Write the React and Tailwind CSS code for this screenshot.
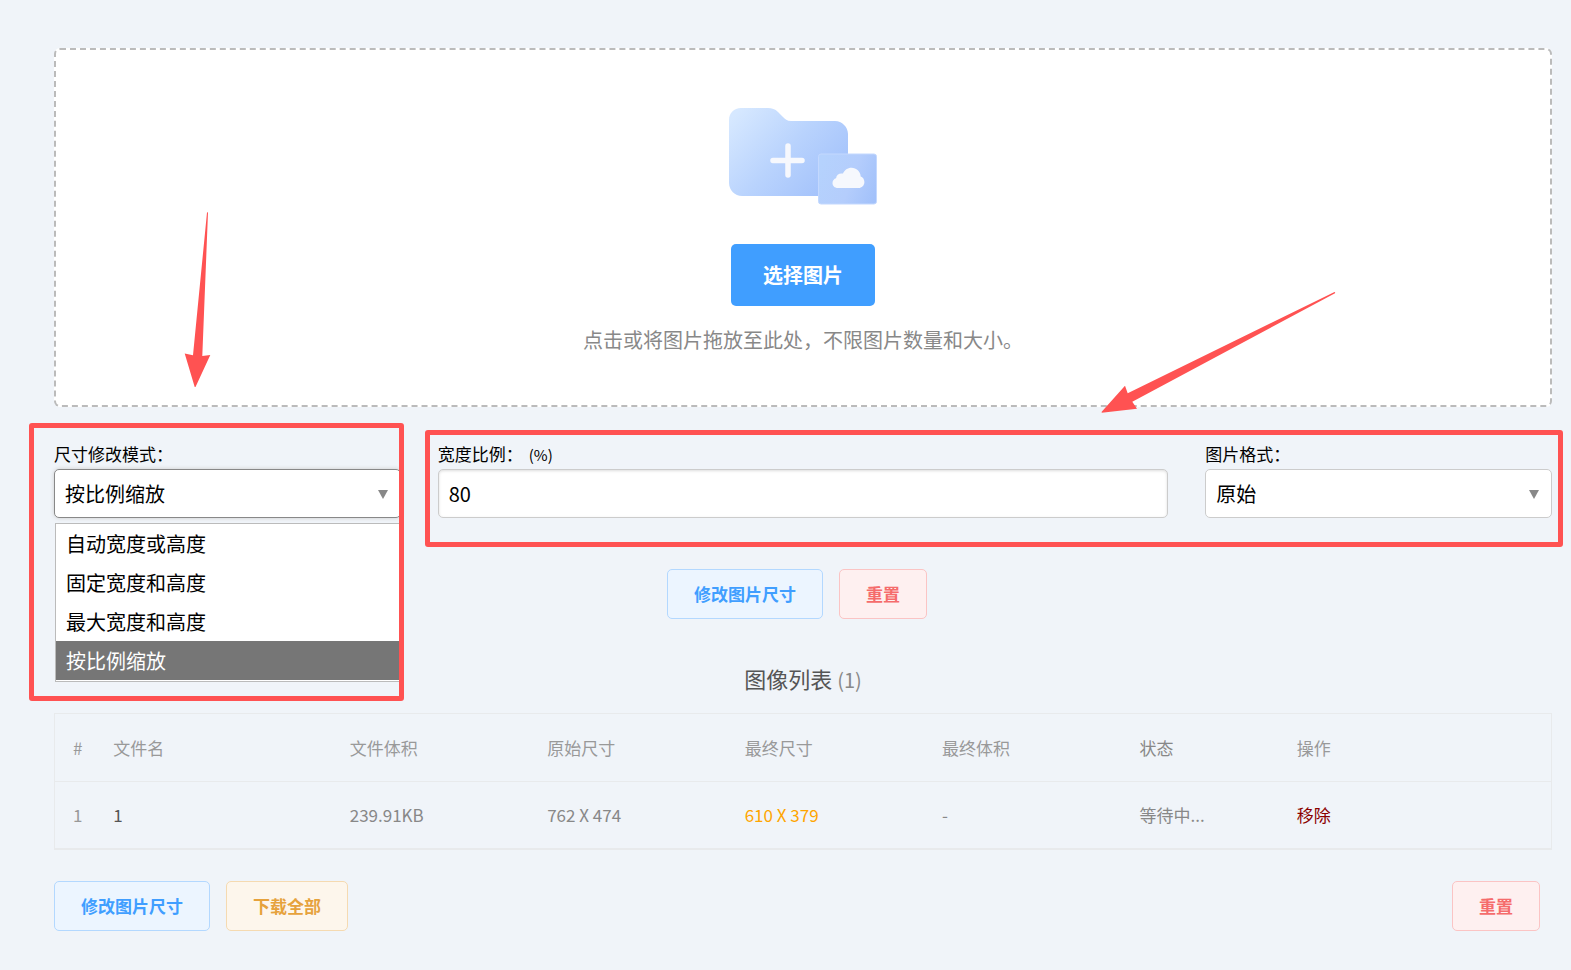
import React, { useState } from "react";

const modes = ["自动宽度或高度", "固定宽度和高度", "最大宽度和高度", "按比例缩放"];
const formats = ["原始", "JPG", "PNG", "WEBP"];

const images = [
  {
    id: 1,
    name: "1",
    size: "239.91KB",
    original: "762 X 474",
    final: "610 X 379",
    finalSize: "-",
    status: "等待中...",
  },
];

const buttonColors = {
  primary: "border-[#b3d8ff] bg-[#ecf5ff] text-[#409eff]",
  warning: "border-[#f5dab1] bg-[#fdf6ec] text-[#e6a23c]",
  danger: "border-[#fbc4c4] bg-[#fef0f0] text-[#f56c6c]",
};

const Button = ({ type, children, onClick }) => (
  <button
    type="button"
    onClick={onClick}
    className={`h-[50px] rounded-[5px] border px-[26px] text-[17px] font-semibold ${buttonColors[type]}`}
  >
    {children}
  </button>
);

const FolderIcon = () => (
  <svg width="148" height="98" viewBox="0 0 148 98" fill="none" aria-hidden="true">
    <defs>
      <linearGradient id="folder" x1="8" y1="4" x2="100" y2="88" gradientUnits="userSpaceOnUse">
        <stop stopColor="#d6e8ff" />
        <stop offset="0.5" stopColor="#b9d3fd" />
        <stop offset="1" stopColor="#a2c1fb" />
      </linearGradient>
      <linearGradient id="card" x1="90" y1="60" x2="149" y2="82" gradientUnits="userSpaceOnUse">
        <stop stopColor="#b5d2fd" />
        <stop offset="0.55" stopColor="#b4cdfc" />
        <stop offset="1" stopColor="#a2c1fa" />
      </linearGradient>
    </defs>
    <path
      d="M12 0h27c4 0 7 1 10 4l5 5c2 2 4 4 8 4h44c7 0 13 6 13 13v49c0 7-6 13-13 13H13C6 88 0 82 0 75V12C0 5 5 0 12 0z"
      fill="url(#folder)"
    />
    <path d="M59 38v29M44 52.500h29" stroke="#f6f8fd" strokeWidth="5.500" strokeLinecap="round" />
    <rect x="89.500" y="46" width="58" height="50" rx="2.500" fill="url(#card)" stroke="#c3d8fe" />
    <path
      d="M109 80c-3.500 0-5.500-2.300-5.500-5 0-2.400 1.500-4.300 3.600-4.800.2-2.900 2.400-4.800 5.400-4.800.5 0 1 0 1.500.2 1.400-3.500 4.600-5.800 8.500-5.800 4.900 0 8.900 3.800 9.200 8.600 2.200.8 3.700 2.900 3.700 5.500 0 3.300-2.500 6.100-6 6.100z"
      fill="#f6f8fd"
    />
  </svg>
);

const Caret = () => (
  <svg
    width="10"
    height="9"
    viewBox="0 0 10 9"
    className="pointer-events-none absolute right-[13px] top-[21px]"
    aria-hidden="true"
  >
    <path d="M0 0h10L5 9z" fill="#888" />
  </svg>
);

const App = () => {
  const [mode, setMode] = useState("按比例缩放");
  const [format, setFormat] = useState("原始");
  const [ratio, setRatio] = useState("80");

  return (
    <div className="relative min-h-screen bg-[#f0f4f9] pt-12 pr-[19px] pb-9 pl-[54px] font-['Noto_Sans_CJK_SC','Noto_Sans',sans-serif] text-black">
      {/* Drop zone */}
      <div className="flex flex-col items-center rounded-[6px] border-2 border-dashed border-[#bbb] bg-white pt-[58px] pb-[50px]">
        <FolderIcon />
        <button
          type="button"
          className="mt-[38px] h-[62px] rounded-[5px] bg-[#409eff] px-8 text-[20px] font-bold text-white"
        >
          选择图片
        </button>
        <p className="mt-[19px] text-[20px] leading-[30px] text-[#888]">
          点击或将图片拖放至此处，不限图片数量和大小。
        </p>
      </div>

      {/* Options */}
      <div className="mt-8 grid grid-cols-4 gap-[37px]">
        <div className="relative">
          <label htmlFor="mode" className="block h-[30px] text-[17px] leading-[30px]">
            尺寸修改模式：
          </label>
          <div className="relative">
            <select
              id="mode"
              value={mode}
              onChange={(e) => setMode(e.target.value)}
              className="h-[49px] w-full appearance-none rounded-[5px] border border-[#888] bg-white px-2.5 text-[20px] shadow-[0_0_4px_#ccc] outline-none"
            >
              {modes.map((m) => (
                <option key={m}>{m}</option>
              ))}
            </select>
            <Caret />
            <ul className="absolute inset-x-px top-full mt-[5px] border border-[#bbb] bg-white pb-px text-[20px] leading-[39px]">
              {modes.map((m) => (
                <li
                  key={m}
                  onClick={() => setMode(m)}
                  className={m === mode ? "bg-[#767676] px-2.5 text-white" : "px-2.5"}
                >
                  {m}
                </li>
              ))}
            </ul>
          </div>
          <div className="pointer-events-none absolute -top-4 -right-[3px] -left-[25px] h-[278px] rounded-[3px] border-5 border-[#ff5252]" />
        </div>

        <div className="relative col-span-3 grid grid-cols-3 gap-[37px]">
          <div className="col-span-2">
            <label htmlFor="ratio" className="block h-[30px] text-[17px] leading-[30px]">
              宽度比例：<span className="ml-1.5 text-[15px]">(%)</span>
            </label>
            <input
              id="ratio"
              type="text"
              value={ratio}
              onChange={(e) => setRatio(e.target.value)}
              className="block h-[49px] w-full rounded-[5px] border border-[#ccc] bg-white px-2.5 text-[20px] shadow-[inset_0_1px_3px_#ddd] outline-none"
            />
          </div>
          <div>
            <label htmlFor="format" className="block h-[30px] text-[17px] leading-[30px]">
              图片格式：
            </label>
            <div className="relative">
              <select
                id="format"
                value={format}
                onChange={(e) => setFormat(e.target.value)}
                className="block h-[49px] w-full appearance-none rounded-[5px] border border-[#ccc] bg-white px-2.5 text-[20px] outline-none"
              >
                {formats.map((f) => (
                  <option key={f}>{f}</option>
                ))}
              </select>
              <Caret />
            </div>
          </div>
          <div className="pointer-events-none absolute -top-[9px] -right-[11px] -bottom-[29px] -left-[13px] rounded-[3px] border-5 border-[#ff5252]" />
        </div>
      </div>

      <div className="mt-[51px] flex justify-center gap-4 pr-3">
        <Button type="primary">修改图片尺寸</Button>
        <Button type="danger">重置</Button>
      </div>

      {/* Image list */}
      <h2 className="mt-[43px] text-center text-[22px] leading-8 text-[#555]">
        图像列表 <span className="text-[20px] text-[#888]">(1)</span>
      </h2>

      <table className="mt-[17px] w-full table-fixed border-separate border-spacing-0 border border-b-2 border-[#e8eaec] text-left text-[17px] text-[#888]">
        <colgroup>
          <col className="w-[3.9%]" />
          <col className="w-[15.8%]" />
          <col className="w-[13.2%]" />
          <col className="w-[13.2%]" />
          <col className="w-[13.2%]" />
          <col className="w-[13.2%]" />
          <col className="w-[10.5%]" />
          <col />
        </colgroup>
        <thead>
          <tr className="h-[68px] text-[#999] *:border-b *:border-[#e8eaec] *:font-normal">
            <th className="pl-[18px]">#</th>
            <th>文件名</th>
            <th>文件体积</th>
            <th>原始尺寸</th>
            <th>最终尺寸</th>
            <th>最终体积</th>
            <th className="text-[#888]">状态</th>
            <th>操作</th>
          </tr>
        </thead>
        <tbody>
          {images.map((img) => (
            <tr key={img.id} className="h-[66px]">
              <td className="pl-[18px] text-[#999]">{img.id}</td>
              <td className="text-[#555]">{img.name}</td>
              <td>{img.size}</td>
              <td>{img.original}</td>
              <td className="text-[#ffa500]">{img.final}</td>
              <td>{img.finalSize}</td>
              <td>{img.status}</td>
              <td>
                <button type="button" className="text-[#8b0000]">
                  移除
                </button>
              </td>
            </tr>
          ))}
        </tbody>
      </table>

      <div className="mt-[31px] flex gap-4 pr-3">
        <Button type="primary">修改图片尺寸</Button>
        <Button type="warning">下载全部</Button>
        <div className="ml-auto">
          <Button type="danger">重置</Button>
        </div>
      </div>

      {/* Arrows pointing at the marked options */}
      <svg
        width="27"
        height="176"
        viewBox="184 212 27 176"
        className="pointer-events-none absolute top-[212px] left-[184px]"
        aria-hidden="true"
      >
        <path
          d="M207 212.500Q207.500 212 208 212.500L202.300 356L210.300 355L195.500 387L194.700 387L184.700 353.500L193 355.300z"
          fill="#ff5252"
        />
      </svg>
      <svg
        width="236"
        height="123"
        viewBox="1100 291 236 123"
        className="pointer-events-none absolute top-[291px] right-[235px]"
        aria-hidden="true"
      >
        <path
          d="M1334.500 292Q1335.500 292.500 1335 293.300L1132.300 401.700L1137 408.700L1101.700 412.800V411.700L1125 385.700L1127.700 393.300z"
          fill="#ff5252"
        />
      </svg>
    </div>
  );
};

export default App;
